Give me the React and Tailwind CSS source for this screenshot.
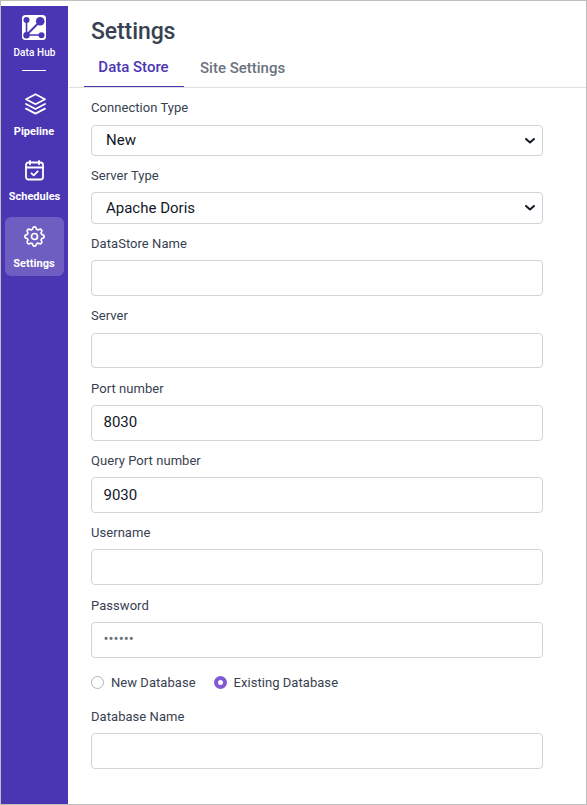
import React from "react";

function Hub() {
  return (
    <svg width="24" height="25" viewBox="0 0 24 25" fill="none">
      <rect width="24" height="25" rx="3.5" fill="#fff" />
      <g stroke="#4a36b3" strokeWidth="1.6">
        <path d="M4.5 5.5V20H19.5" />
        <path d="M4.5 20L18 6.5" strokeWidth="1.9" />
      </g>
      <g fill="#4a36b3">
        <circle cx="4.5" cy="5" r="3" />
        <circle cx="18.2" cy="6.3" r="4.3" />
        <circle cx="4.5" cy="20.2" r="3.2" />
        <circle cx="19.5" cy="20.2" r="3" />
      </g>
    </svg>
  );
}

function Layers() {
  return (
    <svg width="21" height="22" viewBox="0 0 21 22" fill="none" stroke="#fff" strokeWidth="1.8" strokeLinejoin="round" strokeLinecap="round">
      <path d="M10.5 1.2L20 6.2L10.5 11.2L1 6.2Z" />
      <path d="M1 11L10.5 16L20 11" />
      <path d="M1 15.6L10.5 20.6L20 15.6" />
    </svg>
  );
}

function Calendar() {
  return (
    <svg width="19" height="21" viewBox="0 0 19 21" fill="none" stroke="#fff" strokeWidth="1.8" strokeLinejoin="round" strokeLinecap="round">
      <rect x="1" y="2.5" width="17" height="17" rx="2.5" />
      <path d="M1 7.5H18M5 1V4.3M14 1V4.3M6.5 13.3L8.7 15.3L12.7 11.3" />
    </svg>
  );
}

const gearOutline = Array.from({ length: 96 }, (_, i) => {
  const a = (i / 96) * Math.PI * 2;
  const r = 8.5 + 1.15 * Math.tanh(1.8 * Math.cos(8 * a));
  return `${(10.5 + r * Math.sin(a)).toFixed(2)},${(10.5 - r * Math.cos(a)).toFixed(2)}`;
}).join(" ");

function Gear() {
  return (
    <svg width="21" height="21" viewBox="0 0 21 21" fill="none" stroke="#fff" strokeWidth="1.7" strokeLinejoin="round">
      <polygon points={gearOutline} />
      <circle cx="10.5" cy="10.5" r="3" />
    </svg>
  );
}

function Field({ label, className, children }) {
  return (
    <div className={"flex flex-col " + className}>
      <div className="h-5 text-[13px] leading-5 tracking-[0.05px] text-[#374151]">{label}</div>
      {children}
    </div>
  );
}

function Select({ value, className }) {
  return (
    <div className={"flex items-center justify-between rounded border border-[#d1d5db] pl-[14px] pr-[6px] text-[15px] text-[#111827] " + className}>
      <span>{value}</span>
      <svg width="12" height="8" viewBox="0 0 12 8" fill="none" stroke="#111827" strokeWidth="2" strokeLinecap="round" strokeLinejoin="round">
        <path d="M2 2L6 5.5L10 2" />
      </svg>
    </div>
  );
}

function Input({ value, className }) {
  return (
    <div className={"flex items-center rounded border border-[#d1d5db] px-[11.5px] pb-[2px] text-[15px] text-[#111827] " + className}>{value}</div>
  );
}

export default function App() {
  return (
    <div className="flex h-[805px] w-[587px] overflow-hidden border border-[#bebebe] bg-white font-[Roboto,sans-serif]">
      <nav className="mt-[5px] flex w-[67px] shrink-0 flex-col items-center bg-[#4a36b3] text-white">
        <div className="mt-[9px] mr-px"><Hub /></div>
        <div className="mt-[5px] text-[10px] leading-4 font-medium tracking-[0.1px]">Data Hub</div>
        <div className="mt-[9px] mr-px h-px w-6 bg-white" />
        <div className="mt-[22px] ml-[2px]"><Layers /></div>
        <div className="mt-[9px] mr-px text-[11px] leading-4 font-bold tracking-[0.05px]">Pipeline</div>
        <div className="mt-[20px]"><Calendar /></div>
        <div className="mt-[8px] text-[11px] leading-4 font-bold">Schedules</div>
        <div className="mt-[12px] flex h-[59px] w-[59px] flex-col items-center rounded-md bg-[#6e5ec2]">
          <div className="mt-[9px]"><Gear /></div>
          <div className="mt-[9px] mr-px text-[11px] leading-4 font-bold tracking-[0.05px]">Settings</div>
        </div>
      </nav>
      <main className="flex min-w-0 flex-1 flex-col">
        <h1 className="mt-[14px] ml-[23px] h-8 pt-px text-[23px] leading-8 font-medium tracking-[-0.1px] text-[#374151]">Settings</h1>
        <div className="ml-px flex h-[41px] border-b border-[#e0e0e3] pl-[15px]">
          <div className="h-10 w-[100px] border-b border-[#4a36b3] pr-px text-center text-[15px] leading-10 font-medium text-[#4a36b3]">Data Store</div>
          <div className="ml-4 pt-px text-[15px] leading-10 font-medium text-[#6b7280]">Site Settings</div>
        </div>
        <div className="ml-[23px] flex w-[452px] flex-col">
          <Field label="Connection Type" className="mt-[10px]"><Select value="New" className="mt-[7px] h-[31px]" /></Field>
          <Field label="Server Type" className="mt-[10px]"><Select value="Apache Doris" className="mt-[6px] h-8" /></Field>
          <Field label="DataStore Name" className="mt-[10px]"><Input className="mt-[6px] h-9" /></Field>
          <Field label="Server" className="mt-[10px]"><Input className="mt-[7px] h-[35px]" /></Field>
          <Field label="Port number" className="mt-[11px]"><Input value="8030" className="mt-[6px] h-9" /></Field>
          <Field label="Query Port number" className="mt-[10px]"><Input value={<span className="pt-[2px]">9030</span>} className="mt-[6px] h-9" /></Field>
          <Field label="Username" className="mt-[10px]"><Input className="mt-[6px] h-9" /></Field>
          <Field label="Password" className="mt-[11px]">
            <Input value={<span className="text-[#6b7280]">••••••</span>} className="mt-[6px] h-9" />
          </Field>
          <div className="mt-[15px] flex h-5 items-center text-[13px] leading-5 tracking-[0.05px] text-[#374151]">
            <span className="mb-px size-[13px] rounded-full border border-[#b5b5b5]" />
            <span className="ml-[7px] w-[103px] whitespace-nowrap">New Database</span>
            <span className="mb-px size-[13px] rounded-full border-4 border-[#805ad5] bg-white" />
            <span className="ml-[6.5px]">Existing Database</span>
          </div>
          <Field label="Database Name" className="mt-[14px]"><Input className="mt-[6px] h-9" /></Field>
        </div>
      </main>
    </div>
  );
}
